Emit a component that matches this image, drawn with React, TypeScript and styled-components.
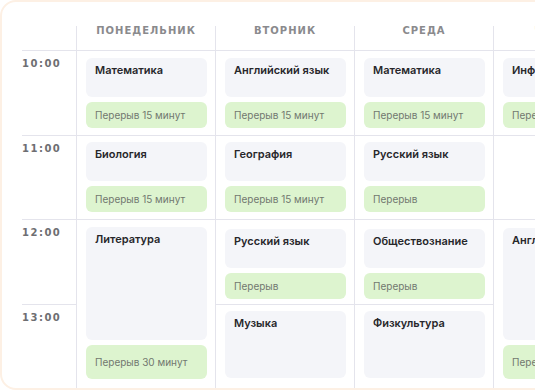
import React from "react";
import styled, { createGlobalStyle } from "styled-components";

const GlobalStyle = createGlobalStyle`
  html, body {
    margin: 0;
    padding: 0;
    background: #ffffff;
    overflow: hidden;
  }
  * {
    box-sizing: border-box;
  }
`;

type Lesson = {
  title: string;
  pause?: string;
  span?: number;
  top: number;
  bottom: number;
};

const days = ["Понедельник", "Вторник", "Среда", "Четверг"];
const times = ["10:00", "11:00", "12:00", "13:00"];

// null = занято уроком из строки выше, undefined = пустая ячейка
const schedule: (Lesson | null | undefined)[][] = [
  [
    { title: "Математика", pause: "Перерыв 15 минут", top: 7, bottom: 7 },
    { title: "Английский язык", pause: "Перерыв 15 минут", top: 7, bottom: 7 },
    { title: "Математика", pause: "Перерыв 15 минут", top: 7, bottom: 7 },
    { title: "Информатика", pause: "Перерыв 15 минут", top: 7, bottom: 7 },
  ],
  [
    { title: "Биология", pause: "Перерыв 15 минут", top: 6, bottom: 7 },
    { title: "География", pause: "Перерыв 15 минут", top: 6, bottom: 7 },
    { title: "Русский язык", pause: "Перерыв", top: 6, bottom: 7 },
    undefined,
  ],
  [
    { title: "Литература", pause: "Перерыв 30 минут", span: 2, top: 7, bottom: 9 },
    { title: "Русский язык", pause: "Перерыв", top: 9, bottom: 5 },
    { title: "Обществознание", pause: "Перерыв", top: 9, bottom: 5 },
    { title: "Английский язык", pause: "Перерыв 30 минут", span: 2, top: 8, bottom: 9 },
  ],
  [
    null,
    { title: "Музыка", top: 6, bottom: 10 },
    { title: "Физкультура", top: 6, bottom: 10 },
    null,
  ],
];

const Card = styled.div`
  width: 700px;
  height: 390px;
  background: #ffffff;
  border: 2px solid #fdf0e4;
  border-radius: 16px;
  overflow: hidden;
`;

const Board = styled.div`
  display: grid;
  grid-template-columns: 74px repeat(4, 139px);
  grid-template-rows: 48px 85px 84px 85px 1fr;
  height: 100%;
`;

const Corner = styled.div``;

const DayHead = styled.div`
  margin-top: 24px;
  border-left: 1px solid #e4e4ec;
  text-align: center;
  font-family: "DejaVu Sans", sans-serif;
  font-weight: 700;
  font-size: 10px;
  line-height: 9px;
  letter-spacing: 1px;
  text-transform: uppercase;
  color: #8a8a8d;
`;

const TimeCell = styled.div<{ $row: number }>`
  grid-column: 1;
  grid-row: ${(p) => p.$row};
  margin-left: 20px;
  padding-top: 7px;
  border-top: 1px solid #e4e4ec;
  font-family: "DejaVu Sans", sans-serif;
  font-weight: 700;
  font-size: 10px;
  line-height: 12px;
  letter-spacing: 1.5px;
  color: #6e6e72;
`;

const Cell = styled.div<{ $row: number; $col: number; $span: number; $top: number; $bottom: number }>`
  grid-column: ${(p) => p.$col};
  grid-row: ${(p) => p.$row} / span ${(p) => p.$span};
  display: flex;
  flex-direction: column;
  gap: 5px;
  padding: ${(p) => p.$top}px 8px ${(p) => p.$bottom}px 9px;
  border-top: 1px solid #e4e4ec;
  border-left: 1px solid #e4e4ec;
  min-width: 0;
`;

const Subject = styled.div`
  flex: 1;
  background: #f4f5f9;
  border-radius: 6px;
  padding: 5px 9px;
  font-family: "Inter", "Noto Sans", sans-serif;
  font-weight: 600;
  font-size: 11px;
  line-height: 14px;
  color: #27272b;
  white-space: nowrap;
`;

const Pause = styled.div<{ $tall: boolean }>`
  flex: none;
  display: flex;
  align-items: center;
  height: ${(p) => (p.$tall ? 34 : 26)}px;
  padding: 0 9px;
  background: #ddf4cf;
  border-radius: 6px;
  font-family: "Inter", "Noto Sans", sans-serif;
  font-size: 10px;
  color: #72786f;
  white-space: nowrap;
`;

export default function App() {
  return (
    <>
      <GlobalStyle />
      <Card>
        <Board>
          <Corner />
          {days.map((d) => (
            <DayHead key={d}>{d}</DayHead>
          ))}
          {times.map((t, r) => (
            <React.Fragment key={t}>
              <TimeCell $row={r + 2}>{t}</TimeCell>
              {schedule[r].map((lesson, c) => {
                if (lesson === null) return null;
                if (!lesson) {
                  return <Cell key={c} $row={r + 2} $col={c + 2} $span={1} $top={0} $bottom={0} />;
                }
                const span = lesson.span ?? 1;
                return (
                  <Cell
                    key={c}
                    $row={r + 2}
                    $col={c + 2}
                    $span={span}
                    $top={lesson.top}
                    $bottom={lesson.bottom}
                  >
                    <Subject>{lesson.title}</Subject>
                    {lesson.pause && <Pause $tall={span > 1}>{lesson.pause}</Pause>}
                  </Cell>
                );
              })}
            </React.Fragment>
          ))}
        </Board>
      </Card>
    </>
  );
}
